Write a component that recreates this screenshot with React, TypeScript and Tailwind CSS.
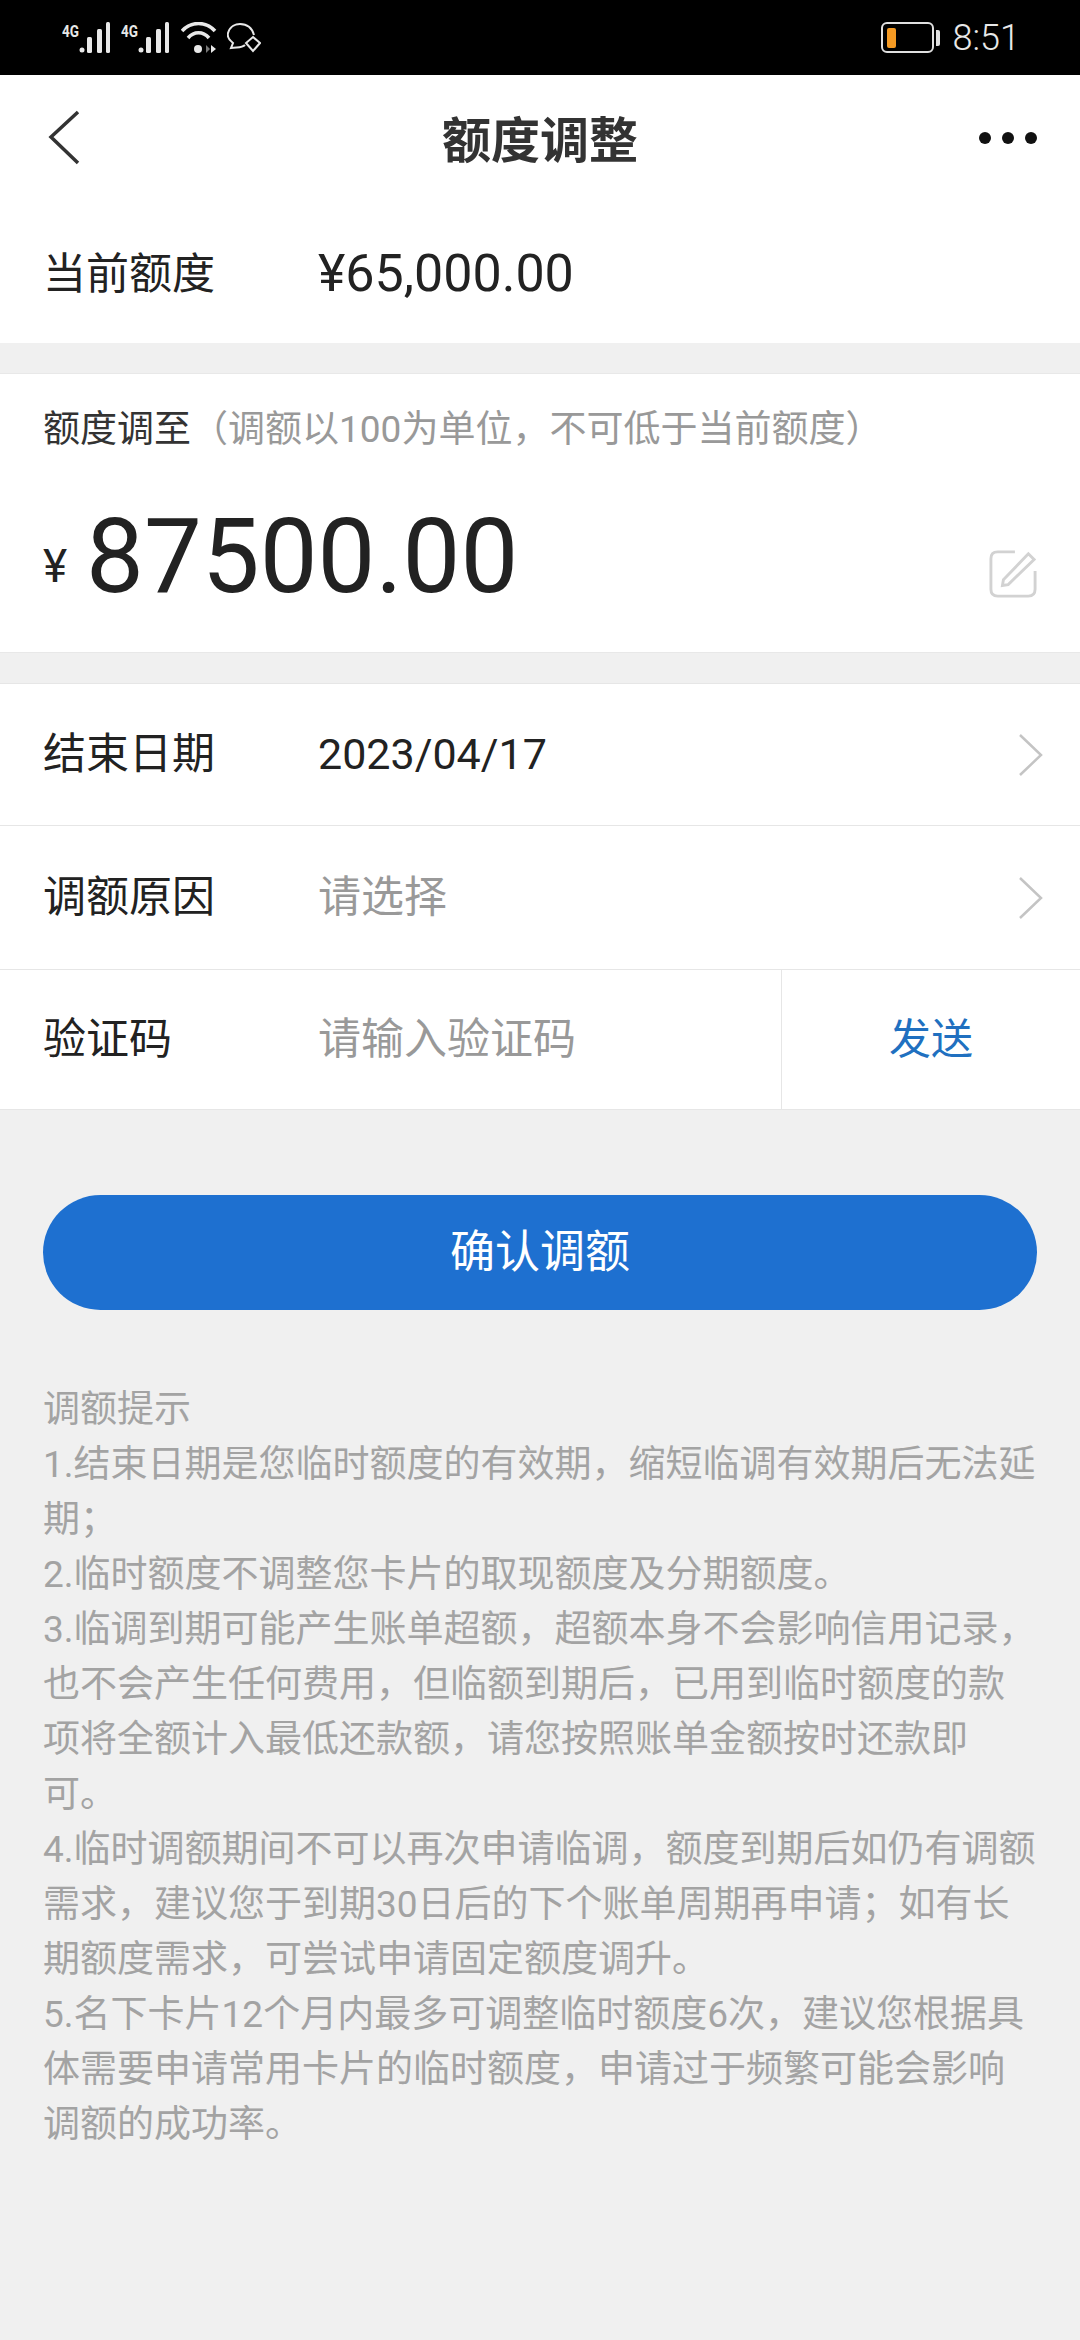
const cjk = 'font-["Roboto","Noto_Sans_CJK_SC",sans-serif]';

function Signal() {
	return (
		<svg width="50" height="32" viewBox="0 0 50 32">
			<text x="0" y="15" fontSize="17" fontWeight="700" fill="#e8e8e8" fontFamily="Roboto" textLength="17" lengthAdjust="spacingAndGlyphs">4G</text>
			<g fill="#e8e8e8">
				<circle cx="20" cy="28" r="2.5" />
				<rect x="25" y="15" width="5" height="16" rx="1.5" />
				<rect x="35" y="7" width="5" height="24" rx="1.5" />
				<rect x="44" y="0" width="4" height="31" rx="1.5" />
			</g>
		</svg>
	);
}

function StatusBar() {
	return (
		<div className="flex h-[75px] items-center justify-between bg-black pl-[62px] pr-[60px] text-[#e8e8e8]">
			<div className="flex items-center">
				<Signal />
				<div className="ml-[9px]">
					<Signal />
				</div>
				<svg width="36" height="32" viewBox="0 0 36 32" fill="none" stroke="#e8e8e8" strokeWidth="3.5" className="ml-[10px]">
					<path d="M1 9C10 -1 25 -1 34 9" />
					<path d="M7 16C13 9 22 9 28 16" />
					<circle cx="17" cy="27" r="4" fill="#e8e8e8" stroke="none" />
					<path d="M25 31V23L29 27Z" fill="#777" stroke="none" />
					<path d="M30 31V23L35 27Z" fill="#e8e8e8" stroke="none" />
				</svg>
				<svg width="34" height="30" viewBox="0 0 34 30" fill="none" stroke="#e8e8e8" strokeWidth="2" className="ml-[10px]">
					<path d="M18 22C15 25 11 24 4 25L6 20C2 17 0 14 1 10C3 3 9 1 13 1C20 1 25 5 27 12" />
					<path d="M26 14L33 20L26 28L19 20Z" />
				</svg>
			</div>
			<div className="flex items-center gap-[13px]">
				<div className="flex items-center gap-[2px]">
					<div className="flex h-[31px] w-[53px] items-center rounded-[6px] border-2 border-[#e0e0e0] pl-[4px]">
						<div className="h-[20px] w-[9px] rounded-[2px] bg-[#f59a23]" />
					</div>
					<div className="h-[16px] w-[4px] rounded-r-[2px] bg-[#e0e0e0]" />
				</div>
				<span className="font-['Roboto',sans-serif] text-[36px] leading-none font-light">8:51</span>
			</div>
		</div>
	);
}

function Chevron() {
	return (
		<svg width="26" height="44" viewBox="0 0 26 44" fill="none" stroke="#c4c4c4" strokeWidth="2.5">
			<path d="M2 2L23 22L2 42" />
		</svg>
	);
}

function Row({ label, height, children }: { label: string; height: string; children: React.ReactNode }) {
	return (
		<div className={`flex items-center border-b border-[#e6e6e6] pl-[43px] pr-[36px] ${height}`}>
			<span className="w-[275px] text-[43px] leading-none text-[#222]">{label}</span>
			<div className="flex flex-1 items-center justify-between">{children}</div>
		</div>
	);
}

const tips = [
	'调额提示',
	'1.结束日期是您临时额度的有效期，缩短临调有效期后无法延期；',
	'2.临时额度不调整您卡片的取现额度及分期额度。',
	'3.临调到期可能产生账单超额，超额本身不会影响信用记录，也不会产生任何费用，但临额到期后，已用到临时额度的款项将全额计入最低还款额，请您按照账单金额按时还款即可。',
	'4.临时调额期间不可以再次申请临调，额度到期后如仍有调额需求，建议您于到期30日后的下个账单周期再申请；如有长期额度需求，可尝试申请固定额度调升。',
	'5.名下卡片12个月内最多可调整临时额度6次，建议您根据具体需要申请常用卡片的临时额度，申请过于频繁可能会影响调额的成功率。',
];

export default function App() {
	return (
		<div className={`flex h-[2340px] w-[1080px] flex-col overflow-hidden bg-[#f0f0f0] ${cjk}`}>
			<StatusBar />

			{/* 顶部 */}
			<div className="bg-white">
				<div className="relative flex h-[130px] items-center justify-center">
					<svg width="34" height="56" viewBox="0 0 34 56" fill="none" stroke="#333" strokeWidth="3.5" className="absolute left-[47px] top-[35px]">
						<path d="M31 2L4 27L31 53" />
					</svg>
					<span className="mt-[2px] text-[49px] leading-none font-bold text-[#333]">额度调整</span>
					<div className="absolute right-[43px] top-[57px] flex gap-[11px]">
						<div className="h-[12px] w-[12px] rounded-full bg-[#111]" />
						<div className="h-[12px] w-[12px] rounded-full bg-[#111]" />
						<div className="h-[12px] w-[12px] rounded-full bg-[#111]" />
					</div>
				</div>
				<div className="flex h-[138px] items-center pl-[43px]">
					<span className="w-[275px] text-[43px] leading-none text-[#222]">当前额度</span>
					<span className="text-[52px] leading-none text-[#222]">¥65,000.00</span>
				</div>
			</div>

			{/* 额度调至 */}
			<div className="mt-[30px] h-[280px] border-y border-[#e8e8e8] bg-white pl-[43px] pr-[43px] pt-[37px]">
				<div className="text-[37px] leading-none whitespace-nowrap">
					<span className="text-[#333]">额度调至</span>
					<span className="text-[#999]">（调额以100为单位，不可低于当前额度）</span>
				</div>
				<div className="mt-[49px] flex items-end justify-between">
					<div className="flex items-center">
						<span className="mt-[18px] w-[43px] text-[46px] leading-none text-[#222]">¥</span>
						<span className="text-[103px] leading-[120px] text-[#222]">87500.00</span>
					</div>
					<svg width="48" height="48" viewBox="0 0 50 50" fill="none" stroke="#d2d2d2" strokeWidth="3" className="mb-[19px]">
						<path d="M27 2H9Q2 2 2 9V41Q2 48 9 48H41Q48 48 48 41V22" />
						<path d="M15 31L41 4L47 10L20 36L14 37Z" />
					</svg>
				</div>
			</div>

			{/* 表单 */}
			<div className="mt-[30px] border-y border-[#e6e6e6] bg-white">
				<Row label="结束日期" height="h-[142px]">
					<span className="text-[43px] leading-none text-[#222]">2023/04/17</span>
					<Chevron />
				</Row>
				<Row label="调额原因" height="h-[144px]">
					<span className="text-[43px] leading-none text-[#999]">请选择</span>
					<Chevron />
				</Row>
				<div className="flex h-[139px] items-center pl-[43px]">
					<span className="w-[275px] text-[43px] leading-none text-[#222]">验证码</span>
					<span className="flex-1 text-[43px] leading-none text-[#999]">请输入验证码</span>
					<div className="flex h-full w-[299px] items-center justify-center border-l border-[#e6e6e6] text-[42px] text-[#2070c0]">发送</div>
				</div>
			</div>

			<button className="mx-[43px] mt-[85px] h-[115px] rounded-full bg-[#1e70d0] text-[45px] text-white">确认调额</button>

			{/* 提示 */}
			<div className="mt-[72px] pl-[43px] pr-[40px] text-[37px] leading-[55px] text-[#a3a3a3]">
				{tips.map((t) => (
					<p key={t}>{t}</p>
				))}
			</div>
		</div>
	);
}
